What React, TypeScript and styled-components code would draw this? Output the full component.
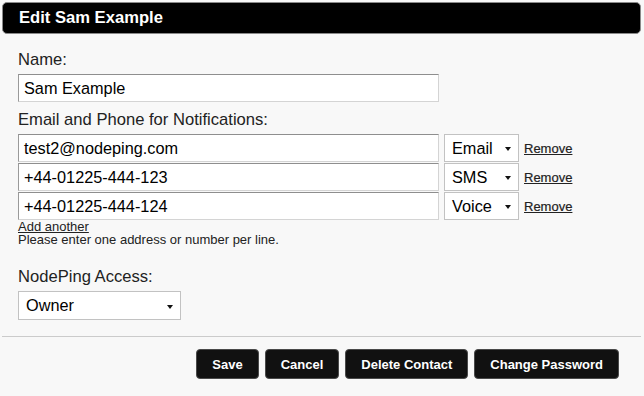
import React from "react";
import styled, { createGlobalStyle } from "styled-components";

const Global = createGlobalStyle`
  html, body { margin: 0; padding: 0; background: #f8f8f8; }
  body { font-family: "Liberation Sans", Arial, Helvetica, sans-serif; color: #222; }
`;

const Dialog = styled.div`
  width: 644px;
  height: 396px;
  box-sizing: border-box;
  padding: 2px 3px 0 2px;
  background: #f8f8f8;
`;

const Header = styled.div`
  height: 32px;
  box-sizing: border-box;
  background: #000;
  border: 1px solid #8a8a8a;
  border-radius: 5px;
  padding-left: 16px;
  color: #fff;
  font-weight: bold;
  font-size: 16.6px;
  line-height: 30px;
`;

const Form = styled.div`
  padding: 17px 16px 0 16px;
  display: flex;
  flex-direction: column;
`;

const Label = styled.div<{ $gapTop?: number }>`
  font-size: 16.6px;
  line-height: 18px;
  margin-top: ${(p) => p.$gapTop ?? 0}px;
  margin-bottom: 5px;
`;

const TextInput = styled.div<{ $width: number }>`
  width: ${(p) => p.$width}px;
  height: 28px;
  box-sizing: border-box;
  background: #fff;
  border: 1px solid #d4d4d4;
  border-top-color: #8e8e8e;
  border-left-color: #9a9a9a;
  padding-left: 5px;
  font-size: 16.3px;
  line-height: 26px;
  color: #000;
`;

const Rows = styled.div`
  display: flex;
  flex-direction: column;
  gap: 1px;
`;

const Row = styled.div`
  display: flex;
  align-items: center;
`;

const Select = styled.div<{ $width: number; $height?: number; $ml?: number }>`
  width: ${(p) => p.$width}px;
  height: ${(p) => p.$height ?? 28}px;
  margin-left: ${(p) => p.$ml ?? 0}px;
  box-sizing: border-box;
  background: #fff;
  border: 1px solid #c2c2c2;
  padding: 0 7px;
  display: flex;
  align-items: center;
  justify-content: space-between;
  font-size: 16.3px;
  color: #000;
`;

const Arrow = styled.span`
  width: 0;
  height: 0;
  border-left: 3.5px solid transparent;
  border-right: 3.5px solid transparent;
  border-top: 4px solid #111;
  margin-top: 2px;
`;

const Link = styled.a`
  font-size: 13px;
  color: #222;
  text-decoration: underline;
  cursor: pointer;
`;

const RemoveLink = styled(Link)`
  margin-left: 5px;
  -webkit-text-stroke: 0.2px #222;
`;

const AddLink = styled(Link)`
  display: block;
  line-height: 13px;
`;

const Hint = styled.div`
  font-size: 13px;
  line-height: 13px;
`;

const Divider = styled.div`
  height: 1px;
  background: #cbcbcb;
  margin-top: 16px;
`;

const Actions = styled.div`
  display: flex;
  justify-content: flex-end;
  gap: 6px;
  padding: 12px 22px 0 0;
`;

const Button = styled.button`
  height: 30px;
  box-sizing: border-box;
  padding: 0 15px;
  background: #111;
  border: 1px solid #4a4a4a;
  border-radius: 4px;
  color: #fff;
  font-family: "Liberation Sans", Arial, Helvetica, sans-serif;
  font-weight: bold;
  font-size: 13px;
  cursor: pointer;
`;

const contacts = [
  { address: "test2@nodeping.com", type: "Email" },
  { address: "+44-01225-444-123", type: "SMS" },
  { address: "+44-01225-444-124", type: "Voice" },
];

export default function App() {
  return (
    <>
      <Global />
      <Dialog>
        <Header>Edit Sam Example</Header>
        <Form>
          <Label>Name:</Label>
          <TextInput $width={421}>Sam Example</TextInput>
          <Label $gapTop={9}>Email and Phone for Notifications:</Label>
          <Rows>
            {contacts.map((c) => (
              <Row key={c.address}>
                <TextInput $width={421}>{c.address}</TextInput>
                <Select $width={75} $ml={5}>
                  {c.type}
                  <Arrow />
                </Select>
                <RemoveLink>Remove</RemoveLink>
              </Row>
            ))}
          </Rows>
          <AddLink>Add another</AddLink>
          <Hint>Please enter one address or number per line.</Hint>
          <Label $gapTop={22}>NodePing Access:</Label>
          <Select $width={163} $height={29}>
            Owner
            <Arrow />
          </Select>
        </Form>
        <Divider />
        <Actions>
          <Button>Save</Button>
          <Button>Cancel</Button>
          <Button>Delete Contact</Button>
          <Button>Change Password</Button>
        </Actions>
      </Dialog>
    </>
  );
}
